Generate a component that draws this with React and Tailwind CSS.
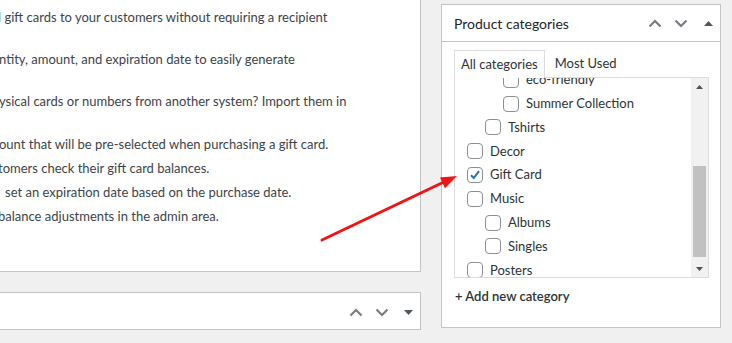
import React from "react";

function ChevronUp() {
  return (
    <svg width="14" height="9" viewBox="0 0 14 9" className="block">
      <polyline points="1.5,7.5 7,2 12.5,7.5" fill="none" stroke="#787c82" strokeWidth="2.2" />
    </svg>
  );
}

function ChevronDown() {
  return (
    <svg width="14" height="9" viewBox="0 0 14 9" className="block">
      <polyline points="1.5,1.5 7,7 12.5,1.5" fill="none" stroke="#787c82" strokeWidth="2.2" />
    </svg>
  );
}

function Caret({ up }) {
  return (
    <svg width="9" height="5" viewBox="0 0 9 5" className="block">
      {up ? <polygon points="0,5 4.5,0 9,5" fill="#50575e" /> : <polygon points="0,0 9,0 4.5,5" fill="#50575e" />}
    </svg>
  );
}

function Checkbox({ checked }) {
  return (
    <span className="flex h-[16px] w-[16px] shrink-0 items-center justify-center rounded-[4px] border border-[#8c8f94] bg-white">
      {checked && (
        <svg width="14" height="14" viewBox="0 0 14 14">
          <path d="M3 7.2 L5.8 10 L11 3.2" fill="none" stroke="#2271b1" strokeWidth="2" />
        </svg>
      )}
    </span>
  );
}

const cats = [
  { name: "eco-friendly", level: 2 },
  { name: "Summer Collection", level: 2 },
  { name: "Tshirts", level: 1 },
  { name: "Decor", level: 0 },
  { name: "Gift Card", level: 0, checked: true },
  { name: "Music", level: 0 },
  { name: "Albums", level: 1 },
  { name: "Singles", level: 1 },
  { name: "Posters", level: 0 },
];

const indent = ["pl-[12px]", "pl-[30px]", "pl-[48px]"];

export default function App() {
  return (
    <div className="relative flex h-[343px] w-[732px] overflow-hidden bg-[#f0f0f1] font-['Lato','Liberation_Sans',sans-serif] text-[13px] text-[#3c434a]">
      {/* left column: description box + collapsed box */}
      <div className="flex w-[421px] shrink-0 flex-col">
        <div className="h-[272px] overflow-hidden whitespace-nowrap border-b border-r border-[#c3c4c7] bg-white pt-[5px] leading-[24px]">
          <div className="h-[42px] ml-[-2px]">l gift cards to your customers without requiring a recipient</div>
          <div className="h-[42px] ml-[-1px]">ntity, amount, and expiration date to easily generate</div>
          <div className="h-[43px] ml-[-1px]">ysical cards or numbers from another system? Import them in</div>
          <div className="h-[24px] ml-[-1px]">ount that will be pre-selected when purchasing a gift card.</div>
          <div className="h-[24px] ml-[-2px]">tomers check their gift card balances.</div>
          <div className="h-[23.5px] ml-[5px]">set an expiration date based on the purchase date.</div>
          <div className="h-[24px] ml-[-2px]">balance adjustments in the admin area.</div>
        </div>
        <div className="mt-[20px] flex h-[38px] items-center justify-end border-y border-r border-[#c3c4c7] bg-white pr-[7px] pt-[3px]">
          <ChevronUp />
          <span className="ml-[12px]"><ChevronDown /></span>
          <span className="ml-[15px]"><Caret /></span>
        </div>
      </div>

      {/* Product categories box */}
      <div className="ml-[20px] mt-[4px] flex h-[324px] w-[280px] flex-col border border-[#c3c4c7] bg-white">
        <div className="flex h-[37px] shrink-0 items-center border-b border-[#c3c4c7] pl-[12px] pr-[7px]">
          <h2 className="flex-1 text-[14px] text-[#1d2327]">Product categories</h2>
          <ChevronUp />
          <span className="ml-[12px]"><ChevronDown /></span>
          <span className="ml-[16px]"><Caret up /></span>
        </div>

        <div className="px-[12px] pt-[8px]">
          <div className="flex items-end">
            <div className="relative z-10 -mb-px flex h-[28px] items-center border border-b-0 border-[#dcdcde] bg-white px-[6px] text-[#2c3338]">
              All categories
            </div>
            <div className="flex h-[27px] items-center px-[10px] text-[#2c3338]">Most Used</div>
          </div>

          <div className="flex h-[201px] w-[255px] border border-[#dcdcde]">
            <ul className="flex-1 overflow-hidden">
              <div className="mt-[-10px]">
                {cats.map((c) => (
                  <li key={c.name} className={`flex h-[23.8px] items-center gap-[7px] text-[#2c3338] ${indent[c.level]}`}>
                    <Checkbox checked={c.checked} />
                    <span>{c.name}</span>
                  </li>
                ))}
              </div>
            </ul>
            {/* scrollbar */}
            <div className="flex w-[17px] shrink-0 flex-col items-center bg-[#f1f1f1]">
              <div className="flex h-[17px] items-center justify-center">
                <svg width="7" height="4" viewBox="0 0 7 4"><polygon points="0,4 3.5,0 7,4" fill="#505050" /></svg>
              </div>
              <div className="flex w-full flex-1 flex-col px-[2px]">
                <div className="mt-[71px] h-[91px] bg-[#c1c1c1]" />
              </div>
              <div className="flex h-[17px] items-center justify-center">
                <svg width="7" height="4" viewBox="0 0 7 4"><polygon points="0,0 7,0 3.5,4" fill="#505050" /></svg>
              </div>
            </div>
          </div>

          <div className="mt-[9px] pl-px font-semibold text-[#2c3338]">+ Add new category</div>
        </div>
      </div>

      {/* red annotation arrow */}
      <svg className="pointer-events-none absolute left-0 top-0" width="732" height="343">
        <line x1="322" y1="240" x2="446" y2="181" stroke="#f01414" strokeWidth="3" strokeLinecap="round" />
        <polygon points="457,176 440,177.5 445,188.3" fill="#f01414" />
      </svg>
    </div>
  );
}
